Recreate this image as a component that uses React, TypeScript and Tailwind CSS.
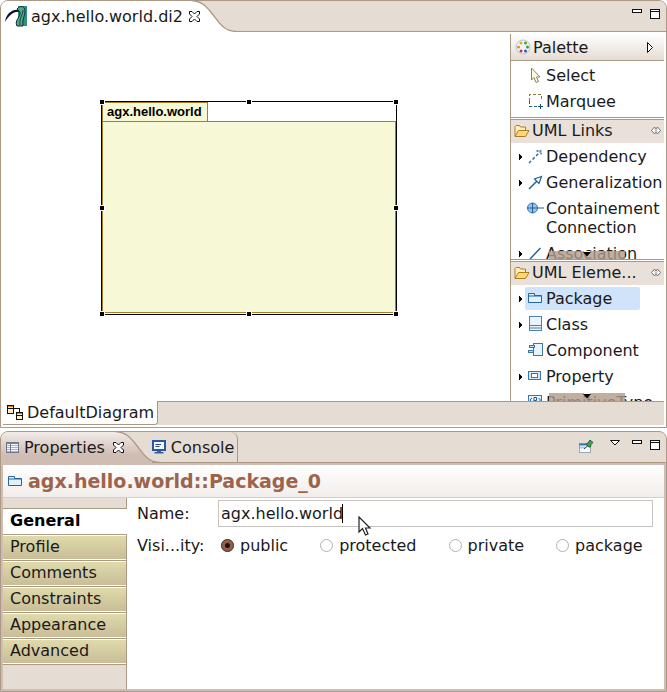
import { useState } from "react";
import type { ReactNode } from "react";

const LINE = "#ac9983";

function CloseIcon() {
  return (
    <svg width="11" height="11" viewBox="0 0 11 11" aria-hidden="true">
      <path
        d="M0.5 0.5H3L5.5 3L8 0.5H10.500V3L8 5.500L10.500 8V10.500H8L5.500 8L3 10.500H0.500V8L3 5.500L0.500 3Z"
        fill="#fff"
        stroke="#111"
      />
    </svg>
  );
}

function TabCurve({ id, from, to }: { id: string; from: string; to: string }) {
  return (
    <svg width="47" height="31" viewBox="0 0 47 31" className="-ml-[11px] shrink-0 bg-[#e5dcd3]" aria-hidden="true">
      <defs>
        <linearGradient id={id} x1="0" y1="0" x2="0" y2="1">
          <stop offset="0" stopColor={from} />
          <stop offset="0.75" stopColor={to} />
        </linearGradient>
      </defs>
      <path d="M0 0H3C15 1 19 8 25 15C31 23 35 30 47 30.5V31H0Z" fill={`url(#${id})`} />
      <path d="M3 -0.5C15 0.5 19 8 25 15C31 23 35 30 47 30.5" fill="none" stroke={LINE} strokeWidth="1.3" />
    </svg>
  );
}

function MinMax() {
  return (
    <>
      <button aria-label="Minimize" className="mt-[8px] h-[5px]">
        <svg width="10" height="5" shapeRendering="crispEdges"><rect x="0.5" y="0.5" width="9" height="3" fill="#fff" stroke="#111" /></svg>
      </button>
      <button aria-label="Maximize" className="mt-[8px] h-[10px]">
        <svg width="10" height="10" shapeRendering="crispEdges">
          <rect x="0.5" y="0.5" width="9" height="9" fill="#fff" stroke="#111" />
          <path d="M0 2.5H10" stroke="#111" />
        </svg>
      </button>
    </>
  );
}

function FolderIcon() {
  return (
    <svg width="16" height="14" viewBox="0 0 16 14" aria-hidden="true">
      <path d="M1 12V2.5L2 1.5H5.5L6.5 3H11.5V6" fill="#fdeebb" stroke="#b07c22" />
      <path d="M1 12.5L4.5 6.5H15L11.5 12.5Z" fill="#fcd877" stroke="#b07c22" />
    </svg>
  );
}

function PackageIcon() {
  return (
    <svg width="15" height="12" viewBox="0 0 15 12" aria-hidden="true">
      <path d="M0.500 10.500V1.500H6.500V3.500H13.500V10.500Z" fill="#e3f0fa" stroke="#22679f" />
      <path d="M0.500 4H13.500" stroke="#22679f" />
    </svg>
  );
}

const icons: Record<string, ReactNode> = {
  select: (
    <svg width="16" height="17" viewBox="0 0 16 17">
      <path d="M3.5 1V13L6 10.5L8 15.5L10.5 14.5L8.5 10H12Z" fill="#fdfbd8" stroke="#858272" />
    </svg>
  ),
  marquee: (
    <svg width="16" height="16" viewBox="0 0 16 16" shapeRendering="crispEdges">
      <path d="M1.500 8V1.500H13.500V8" fill="none" stroke="#8c7c37" strokeDasharray="3 2" />
      <path d="M1.500 8V13.500H10" fill="none" stroke="#236191" strokeDasharray="3 2" />
      <path d="M10 13.500H15M12.500 11V16" stroke="#174a77" />
    </svg>
  ),
  dependency: (
    <svg width="15" height="15" viewBox="0 0 15 15">
      <path d="M1 14L12 3" stroke="#25669c" strokeWidth="1.4" strokeDasharray="3 2" />
      <path d="M8.5 2H13V6.5" fill="none" stroke="#25669c" strokeWidth="1.3" strokeDasharray="2 1" />
    </svg>
  ),
  generalization: (
    <svg width="15" height="15" viewBox="0 0 15 15">
      <path d="M1 14L9 6" stroke="#1b5f96" strokeWidth="1.4" />
      <path d="M13.5 1.5L6.5 4L11 8.5Z" fill="#fff" stroke="#1b5f96" strokeWidth="1.2" />
    </svg>
  ),
  containment: (
    <svg width="17" height="12" viewBox="0 0 17 12">
      <circle cx="5.5" cy="6" r="5" fill="#9bc9ec" stroke="#3474a9" />
      <path d="M0.5 6H17M5.5 1V11" stroke="#22639b" strokeWidth="1.2" />
    </svg>
  ),
  association: (
    <svg width="15" height="15" viewBox="0 0 15 15"><path d="M2 13L12.5 2" stroke="#1b5f96" strokeWidth="1.4" /></svg>
  ),
  package: <PackageIcon />,
  class: (
    <svg width="15" height="16" viewBox="0 0 15 16">
      <rect x="1.5" y="0.5" width="12" height="14" fill="#e9f3fb" stroke="#4d82ad" />
      <path d="M1.500 9.500H13.500M1.500 12H13.500" stroke="#4d82ad" />
    </svg>
  ),
  component: (
    <svg width="16" height="14" viewBox="0 0 16 14">
      <rect x="5.5" y="0.5" width="9" height="12" fill="#e9f3fb" stroke="#3b77a9" />
      <rect x="1.5" y="2.5" width="5" height="2" fill="#b6d6ee" stroke="#3b77a9" />
      <rect x="0.5" y="7.5" width="5" height="2" fill="#b6d6ee" stroke="#3b77a9" />
    </svg>
  ),
  property: (
    <svg width="14" height="10" viewBox="0 0 14 10">
      <rect x="0.5" y="0.5" width="12" height="8" fill="#d5e8f6" stroke="#3b77a9" />
      <rect x="3.5" y="2.5" width="6" height="4" fill="#fff" stroke="#3b77a9" />
    </svg>
  ),
  primitive: (
    <svg width="15" height="15" viewBox="0 0 15 15">
      <rect x="0.5" y="0.5" width="13" height="13" fill="#e9f3fb" stroke="#3b77a9" />
      <path d="M4 3L2 5L4 7M10.5 3L12.5 5L10.5 7M6 8V2.5H8.5V5.5H6" fill="none" stroke="#1f5f96" />
    </svg>
  ),
};

type Item = { icon: string; label: ReactNode; more?: boolean; selected?: boolean; tall?: boolean };

function PaletteItem({ icon, label, more, selected, tall }: Item) {
  return (
    <button className={`flex w-full shrink-0 items-center pl-[8px] text-left ${tall ? "h-[45px]" : "h-[26px]"}`}>
      <span className="w-[6px] shrink-0">
        {more && (
          <svg width="4" height="6" viewBox="0 0 4 6" className="mt-[2px]" shapeRendering="crispEdges"><path d="M0 0H1V1H2V2H3V4H2V5H1V6H0Z" fill="#000" /></svg>
        )}
      </span>
      <span
        className={`flex items-center rounded-xs pl-[3px] ${selected ? "h-[23px] w-[115px] bg-[#cfe3fa]" : ""} ${tall ? "h-[38px]" : ""}`}
      >
        <span className={`flex w-[18px] shrink-0 ${tall ? "h-[38px] pt-[3px]" : ""}`}>
          <span className={tall ? "-ml-px" : ""}>{icons[icon]}</span>
        </span>
        <span className="leading-[19px] whitespace-nowrap">{label}</span>
      </span>
    </button>
  );
}

function Drawer({ title, items }: { title: string; items: Item[] }) {
  return (
    <section>
      <div className="border-t border-[#ac9983] pt-px">
        <button className="flex h-[24px] w-full items-center border-t border-[#ac9983] bg-[#e8e0d9] px-[3px] pb-[2px]">
          <FolderIcon />
          <span className="ml-[2px] flex-1 text-left whitespace-nowrap">{title}</span>
          <svg width="10" height="9" viewBox="0 0 10 9" aria-hidden="true">
            <path d="M3.5 1L0.5 4.5L3.5 8L5 6L6.5 8L9.5 4.5L6.5 1L5 3Z" fill="#fff" stroke="#666" strokeWidth="0.9" />
            <path d="M3.500 3L6.500 6M6.500 3L3.500 6" stroke="#888" strokeWidth="0.700" />
          </svg>
        </button>
      </div>
      <div className="relative flex h-[116px] flex-col overflow-hidden">
        {items.map((it) => (
          <PaletteItem key={it.icon} {...it} />
        ))}
        <button aria-label="Scroll down" className="absolute bottom-0 left-[38px] flex h-[8px] w-[76px] justify-center bg-[#b09b8a]/80">
          <svg width="8" height="6" viewBox="0 0 8 6"><path d="M0 1H8L4 5.500Z" fill="#000" /><path d="M1 0.500H7" stroke="#fff" /></svg>
        </button>
      </div>
    </section>
  );
}

const handles = [
  "left-0 top-0",
  "left-1/2 top-0",
  "left-full top-0",
  "left-0 top-1/2",
  "left-full top-1/2",
  "left-0 top-full",
  "left-1/2 top-full",
  "left-full top-full",
];

function Editor() {
  return (
    <section className="rounded-t-lg border border-[#ac9983] bg-white">
      <header className="flex h-[31px] overflow-hidden rounded-t-[7px] bg-[#e5dcd3]">
        <div className="flex items-center bg-white pl-[4px]">
          <svg width="23" height="21" viewBox="0 0 23 21" aria-hidden="true">
            <rect x="13" y="0" width="9" height="20" fill="#2f9088" />
            <path d="M0 16C1 8 7 3 14 4L15 6C8 5 4 10 0 16Z" fill="#0d0d35" />
            <path d="M12 3C15 -1 20 0 20 5C20 10 17 13 18 20H12C9 14 16 11 15 6Z" fill="#4fae72" stroke="#14234e" />
            <path d="M18 4C18 9 14 12 15 19" fill="none" stroke="#1b3768" />
          </svg>
          <span className="ml-[3px] whitespace-nowrap">agx.hello.world.di2</span>
          <button aria-label="Close" className="relative z-10 ml-[6px]"><CloseIcon /></button>
        </div>
        <TabCurve id="editorTab" from="#ffffff" to="#ffffff" />
        <div className="flex flex-1 items-start justify-end gap-[8px] border-b border-[#ac9983] pr-[6px]">
          <MinMax />
        </div>
      </header>

      <div className="flex pr-[2px] pt-[2px]">
        <main className="relative flex-1">
          <div className="absolute left-[100px] top-[67px] h-[214px] w-[296px] border border-black pb-px">
            <div className="flex h-full flex-col items-start border-l border-[#a1812f]">
              <div className="h-[19px] border-t border-r border-[#a1812f] bg-[#f7f8d6] pr-[5px] pl-[4px] font-['Liberation_Sans',sans-serif] text-[13px] leading-[18px] font-bold text-black">
                agx.hello.world
              </div>
              <div className="w-full flex-1 border-t border-r border-b border-[#a1812f] bg-[#f7f8d6]" />
            </div>
            {handles.map((h) => (
              <span key={h} className={`absolute -mt-[3px] -ml-[3px] size-[6px] border border-white bg-black ${h}`} />
            ))}
          </div>
        </main>
        <aside className="w-[154px] shrink-0 border-l border-[#ac9983]">
          <button className="flex h-[27px] w-full items-center border-b border-[#ac9983] bg-linear-to-b from-white to-[#e5dcd3] pl-[4px] pr-[10px]">
            <svg width="16" height="16" viewBox="0 0 16 16" aria-hidden="true">
              <circle cx="8" cy="8" r="7" fill="#eef3fa" stroke="#b4c6dd" />
              <circle cx="6" cy="4" r="1.500" fill="#e2b21c" />
              <circle cx="10.500" cy="4" r="1.500" fill="#55a12b" />
              <circle cx="3.500" cy="8" r="1.500" fill="#ef8a1d" />
              <circle cx="12.500" cy="8" r="1.500" fill="#3d9b38" />
              <circle cx="6" cy="12" r="1.500" fill="#d42e2e" />
              <circle cx="10.500" cy="12" r="1.500" fill="#2b57b5" />
            </svg>
            <span className="ml-[2px] flex-1 text-left">Palette</span>
            <svg width="7" height="11" viewBox="0 0 7 11" aria-hidden="true"><path d="M0.500 0.500V10.500L5.500 5.500Z" fill="#fff" stroke="#111" /></svg>
          </button>
          <div className="pt-px pb-[3px]">
            <PaletteItem icon="select" label="Select" />
            <PaletteItem icon="marquee" label="Marquee" />
          </div>
          <Drawer
            title="UML Links"
            items={[
              { icon: "dependency", label: "Dependency", more: true },
              { icon: "generalization", label: "Generalization", more: true },
              { icon: "containment", label: <>Containement<br />Connection</>, tall: true },
              { icon: "association", label: "Association", more: true },
            ]}
          />
          <Drawer
            title="UML Eleme..."
            items={[
              { icon: "package", label: "Package", more: true, selected: true },
              { icon: "class", label: "Class", more: true },
              { icon: "component", label: "Component" },
              { icon: "property", label: "Property", more: true },
              { icon: "primitive", label: "PrimitiveType" },
            ]}
          />
        </aside>
      </div>

      <footer className="mr-[2px] mb-[2px] ml-[2px] flex h-[24px]">
        <button className="flex items-center rounded-br-[3px] border-r border-b border-[#ac9983] bg-white pr-[3px] pl-[4px]">
          <svg width="17" height="17" viewBox="0 0 17 17" shapeRendering="crispEdges" aria-hidden="true">
            <rect x="0.500" y="1.500" width="6" height="8" fill="#fdf0c4" stroke="#111" />
            <path d="M1 2.500H6" stroke="#e2792f" />
            <path d="M0 4.500H7M7 4.500H12.500V8" stroke="#111" fill="none" />
            <rect x="9.500" y="8.500" width="6" height="7" fill="#fdf0c4" stroke="#111" />
            <path d="M10 9.500H15" stroke="#e2792f" />
            <path d="M9 11.500H16" stroke="#111" />
          </svg>
          <span className="ml-[3px]">DefaultDiagram</span>
        </button>
        <div className="flex-1 border-t border-[#ac9983] bg-[#e5dcd3]" />
      </footer>
    </section>
  );
}

const sections = ["General", "Profile", "Comments", "Constraints", "Appearance", "Advanced"];
const visibilities = ["public", "protected", "private", "package"];

function Properties() {
  const [name, setName] = useState("agx.hello.world");
  const [visibility, setVisibility] = useState("public");
  return (
    <section className="rounded-t-lg border border-[#ac9983] bg-[#cfbcb2]">
      <header className="flex h-[31px] overflow-hidden rounded-t-[7px] bg-[#e5dcd3]">
        <div className="flex items-center bg-linear-to-b from-[#f1ebe8] to-[#cfbcb2] to-75% pl-[5px]">
          <svg width="14" height="12" viewBox="0 0 14 12" shapeRendering="crispEdges" aria-hidden="true">
            <rect x="0.500" y="0.500" width="12" height="10" fill="#f4f7fb" stroke="#707a8c" />
            <path d="M1 1.500H12" stroke="#6d86ad" />
            <path d="M1 3.500H12M1 5.500H12M1 7.500H12M1 9.500H12" stroke="#a9b6c9" />
            <path d="M4.500 1V10" stroke="#707a8c" />
          </svg>
          <span className="ml-[4px]">Properties</span>
          <button aria-label="Close" className="relative z-10 ml-[8px]"><CloseIcon /></button>
        </div>
        <TabCurve id="propertiesTab" from="#f1ebe8" to="#cfbcb2" />
        <div className="-ml-[8px] flex flex-1 border-b border-[#ac9983]">
          <button className="relative flex items-center rounded-tr-[7px] border-r border-[#ac9983] pr-[3px]">
            <svg width="14" height="14" viewBox="0 0 14 14" aria-hidden="true">
              <rect x="1" y="1" width="12" height="9" fill="#f2f7fd" stroke="#2b579c" strokeWidth="2" />
              <path d="M3.500 4.500H9M3.500 6.500H7.500" stroke="#33456f" />
              <path d="M5 11H9V12H11.500V13.500H2.500V12H5Z" fill="#375f9e" />
            </svg>
            <span className="ml-[5px]">Console</span>
          </button>
          <div className="flex flex-1 items-start justify-end gap-[8px] pr-[6px]">
            <button aria-label="Pin to selection" className="mt-[8px] mr-[8px]">
              <svg width="15" height="14" viewBox="0 0 15 14" aria-hidden="true">
                <rect x="0.500" y="3.500" width="11" height="9" fill="#f8fafc" stroke="#a0a8ae" />
                <path d="M0 4.500H9" stroke="#3579c5" strokeWidth="2" />
                <path d="M1 7.500H6" stroke="#a8cceb" strokeWidth="2" />
                <path d="M5 9L9 5.500" stroke="#333" />
                <path d="M7 4L9 3L11 0L14 2.500L12 4.500L11.500 7L9.500 7Z" fill="#3b9d59" stroke="#23683a" />
              </svg>
            </button>
            <button aria-label="View menu" className="mt-[8px] mr-[4px]">
              <svg width="10" height="6" viewBox="0 0 10 6"><path d="M0.500 0.500H9.500L5 5Z" fill="#fff" stroke="#111" /></svg>
            </button>
            <MinMax />
          </div>
        </div>
      </header>

      <div className="mx-[2px] mt-[2px] mb-[2px] bg-white">
        <h1 className="flex h-[33px] items-center border-b border-[#d9cdc6] bg-linear-to-b from-white to-[#f1edea] pl-[5px] text-[19px] font-bold text-[#9c644c]">
          <PackageIcon />
          <span className="ml-[5px]">agx.hello.world::Package_0</span>
        </h1>
        <div className="flex">
          <nav className="w-[124px] shrink-0 bg-[#e5dcd3] pb-[24px]">
            <div className="h-[10px] border-r border-[#ac9983]" />
            {sections.map((s, i) =>
              i === 0 ? (
                <button key={s} className="block h-[26px] w-full border-t border-[#ac9983] bg-white pb-px pl-[7px] text-left leading-[24px] font-bold text-black">
                  {s}
                </button>
              ) : (
                <div key={s} className="h-[26px] border-t border-r border-[#ac9983] bg-white py-px">
                  <button className="block h-[23px] w-full bg-linear-to-b from-[#dfdaab] to-[#c9bd98] pb-px pl-[7px] text-left leading-[22px]">{s}</button>
                </div>
              ),
            )}
            <div className="-mb-[24px] h-[25px] border-t border-r border-[#ac9983]" />
          </nav>
          <form className="flex-1 pt-[2px] pr-[11px] pl-[10px]">
            <div className="flex items-center">
              <label htmlFor="name" className="w-[81px]">Name:</label>
              <div className="relative flex-1">
                <input
                  id="name"
                  value={name}
                  onChange={(e) => setName(e.target.value)}
                  className="block h-[27px] w-full border border-[#c6c3c0] bg-white px-[2px] outline-none"
                />
                <span className="absolute left-[124px] top-[4px] h-[19px] w-px bg-black" />
                <svg width="14" height="21" viewBox="0 0 14 21" className="absolute left-[140px] top-[16px]" aria-hidden="true">
                  <path d="M1 1V16L4.500 12.500L7.500 19L10 18L7.500 12H12Z" fill="#fff" stroke="#222" strokeWidth="1.200" />
                </svg>
              </div>
            </div>
            <fieldset className="mt-[7px] flex h-[24px] items-start">
              <legend className="float-left w-[84px] leading-[24px]">Visi...ity:</legend>
              <div className="flex h-[22px] items-center gap-8">
                {visibilities.map((v) => (
                  <label key={v} className="flex items-center gap-[6px]">
                    <input
                      type="radio"
                      name="visibility"
                      value={v}
                      checked={visibility === v}
                      onChange={() => setVisibility(v)}
                      className="size-[13px] appearance-none rounded-full border border-[#b3b1af] bg-white checked:border-[4px] checked:border-[#8f5f4c] checked:bg-[#1b1210] checked:outline-1 checked:-outline-offset-1 checked:outline-[#5f3b2e]"
                    />
                    {v}
                  </label>
                ))}
              </div>
            </fieldset>
          </form>
        </div>
      </div>
    </section>
  );
}

export default function App() {
  return (
    <div className="flex flex-col gap-[3px] bg-white font-['DejaVu_Sans',sans-serif] text-[16px] leading-[19px] text-[#1a1a1a]">
      <Editor />
      <Properties />
    </div>
  );
}
